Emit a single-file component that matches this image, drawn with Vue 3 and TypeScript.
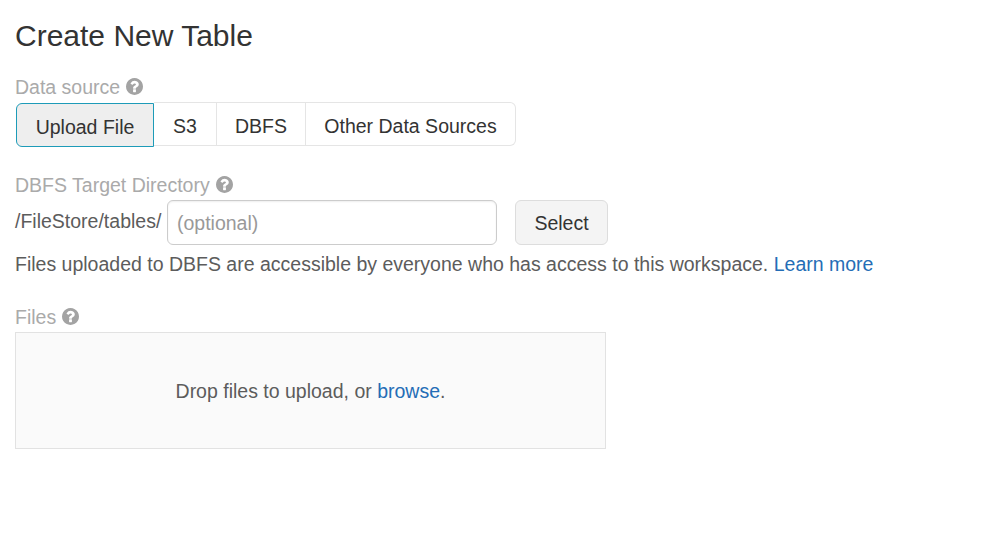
<script setup lang="ts">
import { ref } from 'vue'

const sources: string[] = ['Upload File', 'S3', 'DBFS', 'Other Data Sources']
const active = ref<string>('Upload File')
const directory = ref<string>('')
const helpIcon = 'M1024 1376v-192q0-14-9-23t-23-9h-192q-14 0-23 9t-9 23v192q0 14 9 23t23 9h192q14 0 23-9t9-23zM1280 704q0-88-55.5-163t-138.5-116-170-41q-243 0-371 213-15 24 8 42l132 100q7 6 19 6 16 0 25-12 53-68 86-92 34-24 86-24 48 0 85.5 26t37.5 59q0 38-20 61t-68 45q-63 28-115.5 86.5t-52.5 125.5v36q0 14 9 23t23 9h192q14 0 23-9t9-23q0-19 21.5-49.5t54.5-49.5q32-18 49-28.5t46-35 44.5-48 28-60.5 12.5-81zM1664 896q0 209-103 385.5t-279.5 279.5-385.5 103-385.5-103-279.5-279.5-103-385.5 103-385.5 279.5-279.5 385.5-103 385.5 103 279.5 279.5 103 385.5z'
</script>

<template>
  <main class="page">
    <h1>Create New Table</h1>

    <section class="source">
      <div class="label">
        <span>Data source</span>
        <svg class="help" viewBox="128 128 1536 1536"><path :d="helpIcon" /></svg>
      </div>
      <div class="tabs">
        <button v-for="s in sources" :key="s" :class="{ active: s === active }" @click="active = s">{{ s }}</button>
      </div>
    </section>

    <section class="target">
      <div class="label">
        <span>DBFS Target Directory</span>
        <svg class="help" viewBox="128 128 1536 1536"><path :d="helpIcon" /></svg>
      </div>
      <div class="row">
        <span class="prefix">/FileStore/tables/</span>
        <input v-model="directory" type="text" placeholder="(optional)" />
        <button class="select">Select</button>
      </div>
      <p>Files uploaded to DBFS are accessible by everyone who has access to this workspace. <a href="#">Learn more</a></p>
    </section>

    <section class="files">
      <div class="label">
        <span>Files</span>
        <svg class="help" viewBox="128 128 1536 1536"><path :d="helpIcon" /></svg>
      </div>
      <div class="drop"><span>Drop files to upload, or <a href="#">browse</a>.</span></div>
    </section>
  </main>
</template>

<style>
body { background: #fff; }
</style>

<style scoped>
.page {
  box-sizing: border-box;
  height: 544px;
  padding: 18px 15px 0;
  font: 19.5px/24px "Liberation Sans", Arial, sans-serif;
  color: #5c5c5c;
}
h1 { margin: 0; font-size: 30px; line-height: 36px; font-weight: 400; color: #333; }
.source { margin-top: 21px; }
.label { display: flex; align-items: center; gap: 6px; height: 24px; color: #aaa; }
.help { width: 17px; height: 17px; margin-bottom: 1px; fill: #a3a3a3; }
button, input { box-sizing: border-box; margin: 0; font: inherit; }
.tabs { display: flex; width: 500px; height: 45px; margin: 3px 0 0 1px; }
.tabs button { height: 44px; padding: 3px 18px 0; border: 1px solid #e5e5e5; border-left: 0; background: #fff; color: #333; white-space: nowrap; }
.tabs button:nth-child(2) { width: 63px; }
.tabs button:nth-child(3) { width: 89px; }
.tabs button:last-child { border-radius: 0 6px 6px 0; flex: 1; }
.tabs .active { width: 138px; margin-top: 1px; padding: 3px 0 0; border: 1px solid #1d9bb8; border-radius: 6px 0 0 6px; background: #eee; }
.target { margin-top: 26px; }
.row { display: flex; margin-top: 3px; height: 45px; }
.prefix { width: 152px; line-height: 42px; }
input { width: 330px; padding: 0 9px; border: 1px solid #ccc; border-radius: 6px; color: #555; outline: none; box-shadow: inset 0 1px 2px rgba(0, 0, 0, .07); }
input::placeholder { color: #999; opacity: 1; }
.select { width: 93px; margin-left: 18px; padding: 0; border: 1px solid #ddd; border-radius: 6px; background: #f4f4f4; color: #333; }
p { margin: 7px 0 0; white-space: nowrap; }
a { color: #246db6; text-decoration: none; }
.files { margin-top: 29px; }
.drop { box-sizing: border-box; width: 591px; height: 117px; margin-top: 3px; display: flex; align-items: center; justify-content: center; border: 1px solid #e2e2e2; background: #fafafa; }
</style>
